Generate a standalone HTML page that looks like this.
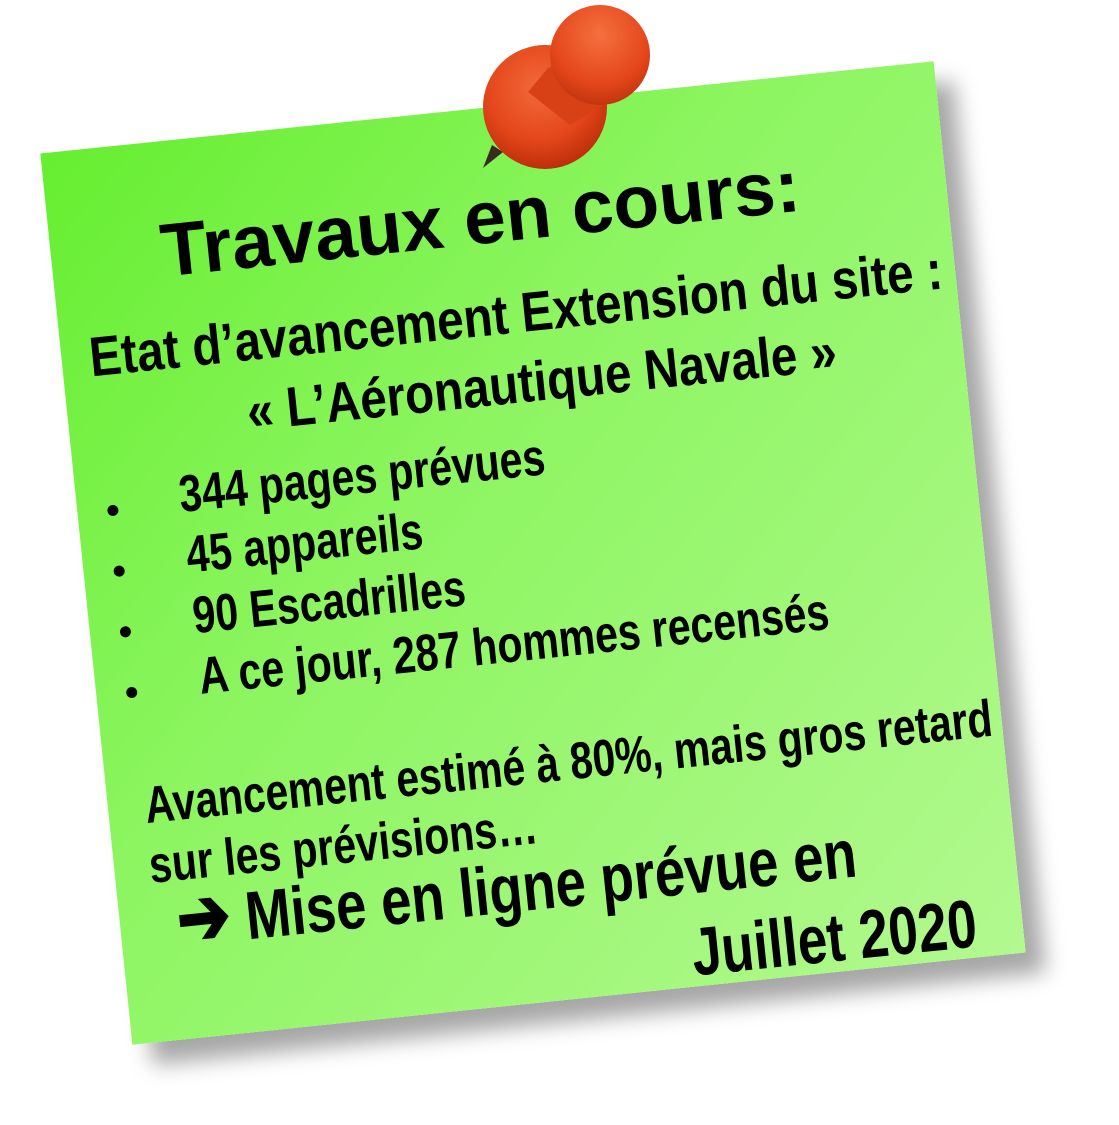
<!DOCTYPE html>
<html><head><meta charset="utf-8"><style>
html,body{margin:0;padding:0;background:#fff;width:1119px;height:1125px;overflow:hidden;position:relative}
.note{position:absolute;left:84px;top:105px;width:898px;height:896px;transform:rotate(-5.9deg);
background:linear-gradient(135deg,#66ee30 0%,#8cf560 40%,#b2f98f 100%);
box-shadow:18px 22px 22px rgba(0,0,0,0.35);}
.t{position:absolute;white-space:nowrap;font-family:"Liberation Sans",sans-serif;font-weight:bold;color:#000;line-height:1;transform-origin:0 0}
.title{font-size:75px;left:110px;top:72px}
.h{font-size:56px;transform:scaleX(0.85)}
.b{font-size:52px;transform:scaleX(0.79)}
.m{font-size:68px;transform:scaleX(0.8)}
.dot{position:absolute;width:11px;height:11px;border-radius:50%;background:#000}
svg{position:absolute;left:0;top:0}
</style></head><body>
<div class="note">
<div class="t title">Travaux en cours:</div>
<div class="t h" style="left:28px;top:180px">Etat d’avancement Extension du site :</div>
<div class="t h" style="left:179px;top:250px">« L’Aéronautique Navale »</div>
<div class="dot" style="left:30px;top:357px"></div>
<div class="t b" style="left:103px;top:328px">344 pages prévues</div>
<div class="dot" style="left:30px;top:418px"></div>
<div class="t b" style="left:104px;top:389px">45 appareils</div>
<div class="dot" style="left:30px;top:479px"></div>
<div class="t b" style="left:104px;top:450px">90 Escadrilles</div>
<div class="dot" style="left:30px;top:540px"></div>
<div class="t b" style="left:104px;top:511px">A ce jour, 287 hommes recensés</div>
<div class="t b" style="left:37px;top:634px;transform:scaleX(0.785)">Avancement estimé à 80%, mais gros retard</div>
<div class="t b" style="left:35px;top:694px">sur les prévisions…</div>
<div class="t m" style="left:57px;top:744px"><span style="font-size:80px;line-height:0.8">➔</span> Mise en ligne prévue en</div>
<div class="t m" style="left:566px;top:828px;transform:scaleX(0.78)">Juillet 2020</div>
</div>
<svg width="1119" height="1125">
<defs>
<radialGradient id="rg" cx="0.45" cy="0.35" r="0.7"><stop offset="0" stop-color="#f26a3a"/><stop offset="0.6" stop-color="#e4461a"/><stop offset="1" stop-color="#b52a08"/></radialGradient>
<radialGradient id="rk" cx="0.5" cy="0.3" r="0.7"><stop offset="0" stop-color="#f5703e"/><stop offset="0.7" stop-color="#e4461a"/><stop offset="1" stop-color="#c23510"/></radialGradient>
</defs>
<path d="M492 145 L483 168 L503 152 Z" fill="#3a2a20"/>
<circle cx="545" cy="107" r="62" fill="url(#rg)"/>
<path d="M548 68 L592 50 L612 100 L570 125 L528 92 Z" fill="#d84016"/>
<circle cx="600" cy="55" r="50" fill="url(#rk)"/>
</svg>
</body></html>
